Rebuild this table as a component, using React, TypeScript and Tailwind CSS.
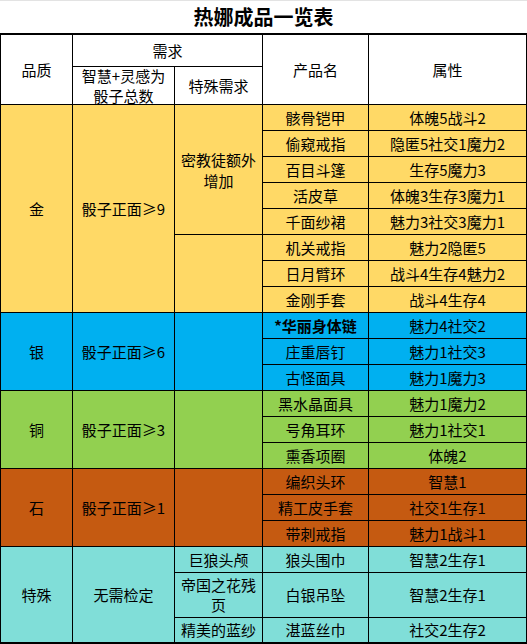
import { ReactNode } from "react";

type Item = {
  name: ReactNode;
  attr: string;
};

type Tier = {
  quality: string;
  need: string;
  bg: string;
  special: { text: ReactNode; span: string }[];
  items: Item[];
};

const tiers: Tier[] = [
  {
    quality: "金",
    need: "骰子正面≥9",
    bg: "bg-[#ffd966]",
    special: [
      { text: <span className="leading-[21px]">密教徒额外<br />增加</span>, span: "row-span-5" },
      { text: "", span: "row-span-3" },
    ],
    items: [
      { name: "骸骨铠甲", attr: "体魄5战斗2" },
      { name: "偷窥戒指", attr: "隐匿5社交1魔力2" },
      { name: "百目斗篷", attr: "生存5魔力3" },
      { name: "活皮草", attr: "体魄3生存3魔力1" },
      { name: "千面纱裙", attr: "魅力3社交3魔力1" },
      { name: "机关戒指", attr: "魅力2隐匿5" },
      { name: "日月臂环", attr: "战斗4生存4魅力2" },
      { name: "金刚手套", attr: "战斗4生存4" },
    ],
  },
  {
    quality: "银",
    need: "骰子正面≥6",
    bg: "bg-[#00b0f0]",
    special: [{ text: "", span: "row-span-3" }],
    items: [
      { name: <span className="font-bold">*华丽身体链</span>, attr: "魅力4社交2" },
      { name: "庄重唇钉", attr: "魅力1社交3" },
      { name: "古怪面具", attr: "魅力1魔力3" },
    ],
  },
  {
    quality: "铜",
    need: "骰子正面≥3",
    bg: "bg-[#92d050]",
    special: [{ text: "", span: "row-span-3" }],
    items: [
      { name: "黑水晶面具", attr: "魅力1魔力2" },
      { name: "号角耳环", attr: "魅力1社交1" },
      { name: "熏香项圈", attr: "体魄2" },
    ],
  },
  {
    quality: "石",
    need: "骰子正面≥1",
    bg: "bg-[#c55a11]",
    special: [{ text: "", span: "row-span-3" }],
    items: [
      { name: "编织头环", attr: "智慧1" },
      { name: "精工皮手套", attr: "社交1生存1" },
      { name: "带刺戒指", attr: "魅力1战斗1" },
    ],
  },
];

const specialItems = [
  { need: "巨狼头颅", name: "狼头围巾", attr: "智慧2生存1" },
  { need: "帝国之花残页", name: "白银吊坠", attr: "智慧2生存1" },
  { need: "精美的蓝纱", name: "湛蓝丝巾", attr: "社交2生存2" },
];

const cell = "flex items-center justify-center text-center leading-[20px]";

export default function App() {
  return (
    <div className="w-[527px] h-[644px] bg-white text-black text-[15px] font-['Noto_Sans_CJK_SC',sans-serif]">
      <div className="h-[33px] border-t border-[#e3e3e3] flex items-center justify-center text-[20px] font-bold">
        热娜成品一览表
      </div>

      <div className="grid grid-cols-[71px_101px_87px_105px_157px] grid-rows-[31px_37px_repeat(17,25px)_25px_44px_24px] gap-px bg-black border-y-2 border-black px-px">
        <div className={`${cell} bg-white row-span-2`}>品质</div>
        <div className={`${cell} bg-white col-span-2`}>需求</div>
        <div className={`${cell} bg-white row-span-2`}>产品名</div>
        <div className={`${cell} bg-white row-span-2`}>属性</div>
        <div className={`${cell} bg-white leading-[18px]`}>
          智慧+灵感为
          <br />
          骰子总数
        </div>
        <div className={`${cell} bg-white`}>特殊需求</div>

        {tiers.map((tier) => {
          const span = tier.items.length === 8 ? "row-span-8" : "row-span-3";
          let specialIdx = 0;
          let specialLeft = 0;
          const out: ReactNode[] = [
            <div key="q" className={`${cell} ${tier.bg} ${span}`}>{tier.quality}</div>,
            <div key="n" className={`${cell} ${tier.bg} ${span}`}>{tier.need}</div>,
          ];
          tier.items.forEach((item, i) => {
            if (specialLeft === 0 && specialIdx < tier.special.length) {
              const s = tier.special[specialIdx];
              out.push(
                <div key={`s${i}`} className={`${cell} ${tier.bg} ${s.span}`}>
                  {s.text}
                </div>
              );
              specialLeft = s.span === "row-span-5" ? 5 : 3;
              specialIdx++;
            }
            specialLeft--;
            out.push(
              <div key={`p${i}`} className={`${cell} ${tier.bg}`}>{item.name}</div>,
              <div key={`a${i}`} className={`${cell} ${tier.bg}`}>{item.attr}</div>
            );
          });
          return out;
        })}

        <div className={`${cell} bg-[#80ded8] row-span-3`}>特殊</div>
        <div className={`${cell} bg-[#80ded8] row-span-3`}>无需检定</div>
        {specialItems.map((s) => [
          <div key={`${s.name}-n`} className={`${cell} bg-[#80ded8] px-[2px] leading-[19px]`}>{s.need}</div>,
          <div key={`${s.name}-p`} className={`${cell} bg-[#80ded8]`}>{s.name}</div>,
          <div key={`${s.name}-a`} className={`${cell} bg-[#80ded8]`}>{s.attr}</div>,
        ])}
      </div>
    </div>
  );
}
